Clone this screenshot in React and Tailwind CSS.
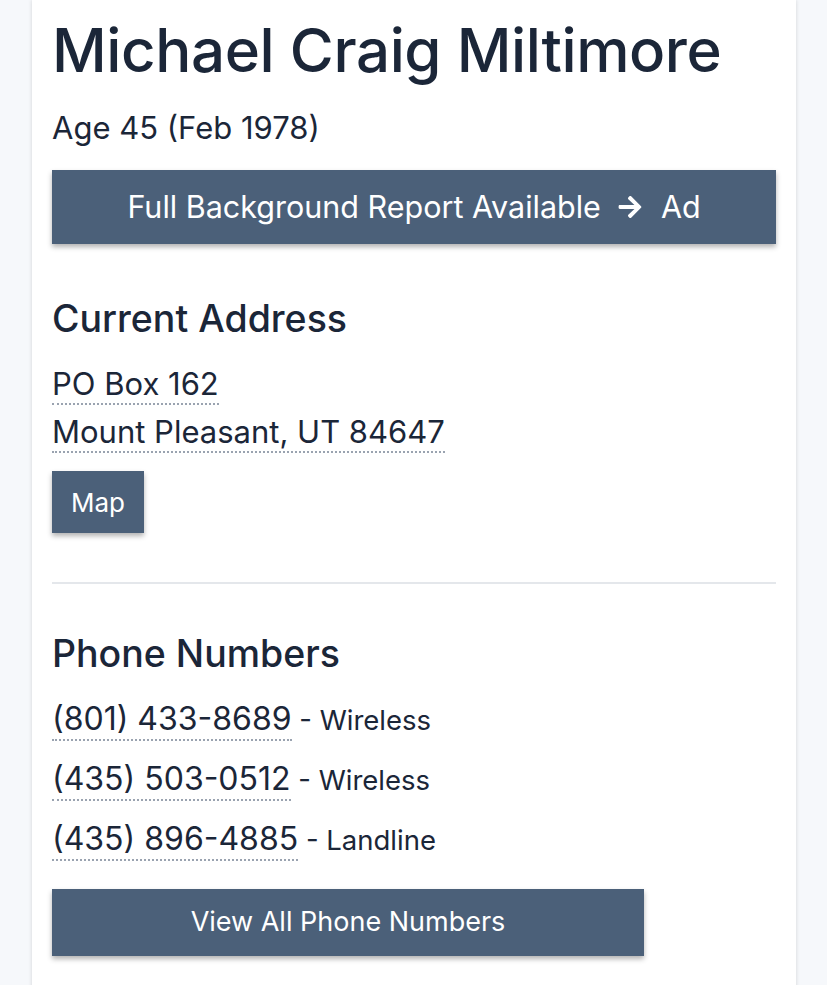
import React from "react";

function Dotted({ children }) {
  return (
    <span className="border-b-2 border-dotted border-[#9aa3b0] pb-[1px]">{children}</span>
  );
}

function Btn({ children, className = "" }) {
  return (
    <div
      className={
        "flex items-center justify-center bg-[#4b6079] text-white shadow-[0_3px_5px_rgba(0,0,0,0.3)] " +
        className
      }
    >
      {children}
    </div>
  );
}

export default function App() {
  return (
    <div
      className="min-h-[985px] bg-[#f6f8fb] px-[32px] text-[#1b2638]"
      style={{ fontFamily: "Inter, 'Noto Sans', sans-serif" }}
    >
      <div className="mx-auto w-[764px] bg-white px-[20px] pb-[40px] shadow-[0_0_4px_rgba(0,0,0,0.15)]">
        <h1 className="pt-[14px] text-[60px] font-medium leading-[72px] tracking-[-0.4px]">
          Michael Craig Miltimore
        </h1>
        <div className="mt-[24px] text-[31px] leading-[36px]">Age 45 (Feb 1978)</div>
        <Btn className="mt-[24px] h-[74px] text-[30.5px]">
          <span>Full Background Report Available</span>
          <svg className="ml-[16px] mr-[18px] h-[26px] w-[26px]" viewBox="0 0 448 512" fill="white">
            <path d="M190.5 66.9l22.2-22.2c9.4-9.4 24.6-9.4 33.9 0L441 239c9.4 9.4 9.4 24.6 0 33.9L246.6 467.3c-9.4 9.4-24.6 9.4-33.9 0l-22.2-22.2c-9.5-9.5-9.3-25 .4-34.3L311.4 296H24c-13.3 0-24-10.7-24-24v-32c0-13.3 10.7-24 24-24h287.4L190.9 101.2c-9.8-9.3-10-24.8-.4-34.3z" />
          </svg>
          <span>Ad</span>
        </Btn>

        <h2 className="mt-[53px] text-[37.5px] font-medium leading-[44px]">Current Address</h2>
        <div className="mt-[19px] text-[31px] leading-[48px]">
          <div>
            <Dotted>PO Box 162</Dotted>
          </div>
          <div>
            <Dotted>Mount Pleasant, UT 84647</Dotted>
          </div>
        </div>
        <Btn className="mt-[15px] h-[62px] w-[92px] text-[26px]">Map</Btn>

        <div className="mt-[49px] h-[2px] bg-[#e4e7eb]" />

        <h2 className="mt-[48px] text-[37.5px] font-medium leading-[44px]">Phone Numbers</h2>
        <div className="mt-[19px] flex flex-col gap-[11px] text-[32px] leading-[48px]">
          <div>
            <Dotted>(801) 433-8689</Dotted>
            <span className="text-[27.5px]"> - Wireless</span>
          </div>
          <div>
            <Dotted>(435) 503-0512</Dotted>
            <span className="text-[27.5px]"> - Wireless</span>
          </div>
          <div>
            <Dotted>(435) 896-4885</Dotted>
            <span className="text-[27.5px]"> - Landline</span>
          </div>
        </div>
        <Btn className="mt-[25px] h-[67px] w-[592px] text-[27px]">View All Phone Numbers</Btn>
      </div>
    </div>
  );
}
